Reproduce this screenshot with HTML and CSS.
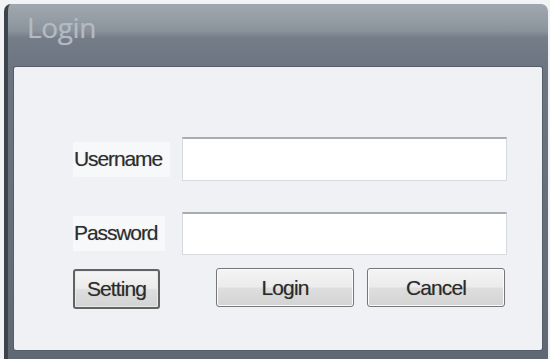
FILE: index.html
```html
<!DOCTYPE html>
<html>
<head>
<meta charset="utf-8">
<link rel="stylesheet" href="styles.css">
</head>
<body>
<div class="window">
  <div class="titlebar"><span class="title">Login</span></div>
  <div class="panel">
    <div class="row">
      <label class="label"><span class="label-text">Username</span></label>
      <div class="input"></div>
    </div>
    <div class="row row-2">
      <label class="label"><span class="label-text">Password</span></label>
      <div class="input"></div>
    </div>
    <div class="buttons">
      <button class="btn btn-setting">Setting</button>
      <div class="btn-group">
        <button class="btn btn-wide">Login</button>
        <button class="btn btn-wide">Cancel</button>
      </div>
    </div>
  </div>
</div>
</body>
</html>
```
FILE: styles.css
```css
html, body {
  margin: 0;
  padding: 0;
}
body {
  width: 550px;
  height: 359px;
  background: #f2f3f4;
  padding: 4px 0 0 4px;
  box-sizing: border-box;
  overflow: hidden;
  font-family: "Liberation Sans", Arial, sans-serif;
}
.window {
  width: 544px;
  height: 360px;
  display: flex;
  flex-direction: column;
  border-radius: 7px 7px 0 0;
  background: linear-gradient(to bottom, #a0a7af 0px, #949ca4 16px, #8a929b 27px, #747d88 34px, #6c7581 60px, #5f6873 100%);
  border-left: 4px solid #3d434a;
  box-sizing: border-box;
}
.titlebar {
  height: 63px;
  flex: none;
  padding-left: 19px;
  box-sizing: border-box;
}
.title {
  display: block;
  font-family: "Open Sans", "Noto Sans", sans-serif;
  font-size: 28px;
  line-height: 28px;
  padding-top: 9px;
  color: #b3bac3;
  letter-spacing: -0.4px;
  text-shadow: 0 0 1px rgba(180,188,198,0.6);
}
.panel {
  margin: 0 6px 0 6px;
  height: 283px;
  flex: none;
  background: #eff1f4;
  border-radius: 2px;
  box-shadow: 0 0 0 1px #555e69;
  padding: 70px 35px 0 59px;
  box-sizing: border-box;
  display: flex;
  flex-direction: column;
}
.row {
  display: flex;
  align-items: center;
  height: 44px;
}
.row-2 {
  margin-top: 31px;
  height: 43px;
}
.label {
  width: 109px;
  flex: none;
  display: flex;
  align-items: center;
}
.label-text {
  font-size: 21px;
  color: #2d2d2d;
  background: #f7f8fa;
  padding: 5px 8px 6px 1px;
  letter-spacing: -1.1px;
  text-shadow: 0 0 1px rgba(0,0,0,0.3);
}
.input {
  flex: 1;
  height: 100%;
  background: #ffffff;
  border: 1px solid #d6d9dd;
  border-top: 2px solid #a9adb2;
  box-sizing: border-box;
}
.buttons {
  display: flex;
  margin-top: 13px;
  align-items: flex-start;
}
.btn {
  font-family: "Liberation Sans", Arial, sans-serif;
  font-size: 21px;
  color: #2a2a2a;
  border: 1px solid #767676;
  border-radius: 3px;
  background: linear-gradient(to bottom, #f4f4f4 0%, #ececec 48%, #dedede 52%, #d3d3d3 100%);
  box-shadow: inset 0 0 0 1px #fbfbfb;
  padding: 0;
  margin: 0;
  letter-spacing: -0.9px;
  text-shadow: 0 0 1px rgba(0,0,0,0.3);
}
.btn-setting {
  width: 87px;
  height: 40px;
  border: 2px solid #626262;
  margin-top: 1px;
  box-shadow: inset 0 0 0 1px #e9e9e9;
}
.btn-group {
  display: flex;
  gap: 13px;
  margin-left: 56px;
}
.btn-wide {
  width: 138px;
  height: 39px;
}
```
